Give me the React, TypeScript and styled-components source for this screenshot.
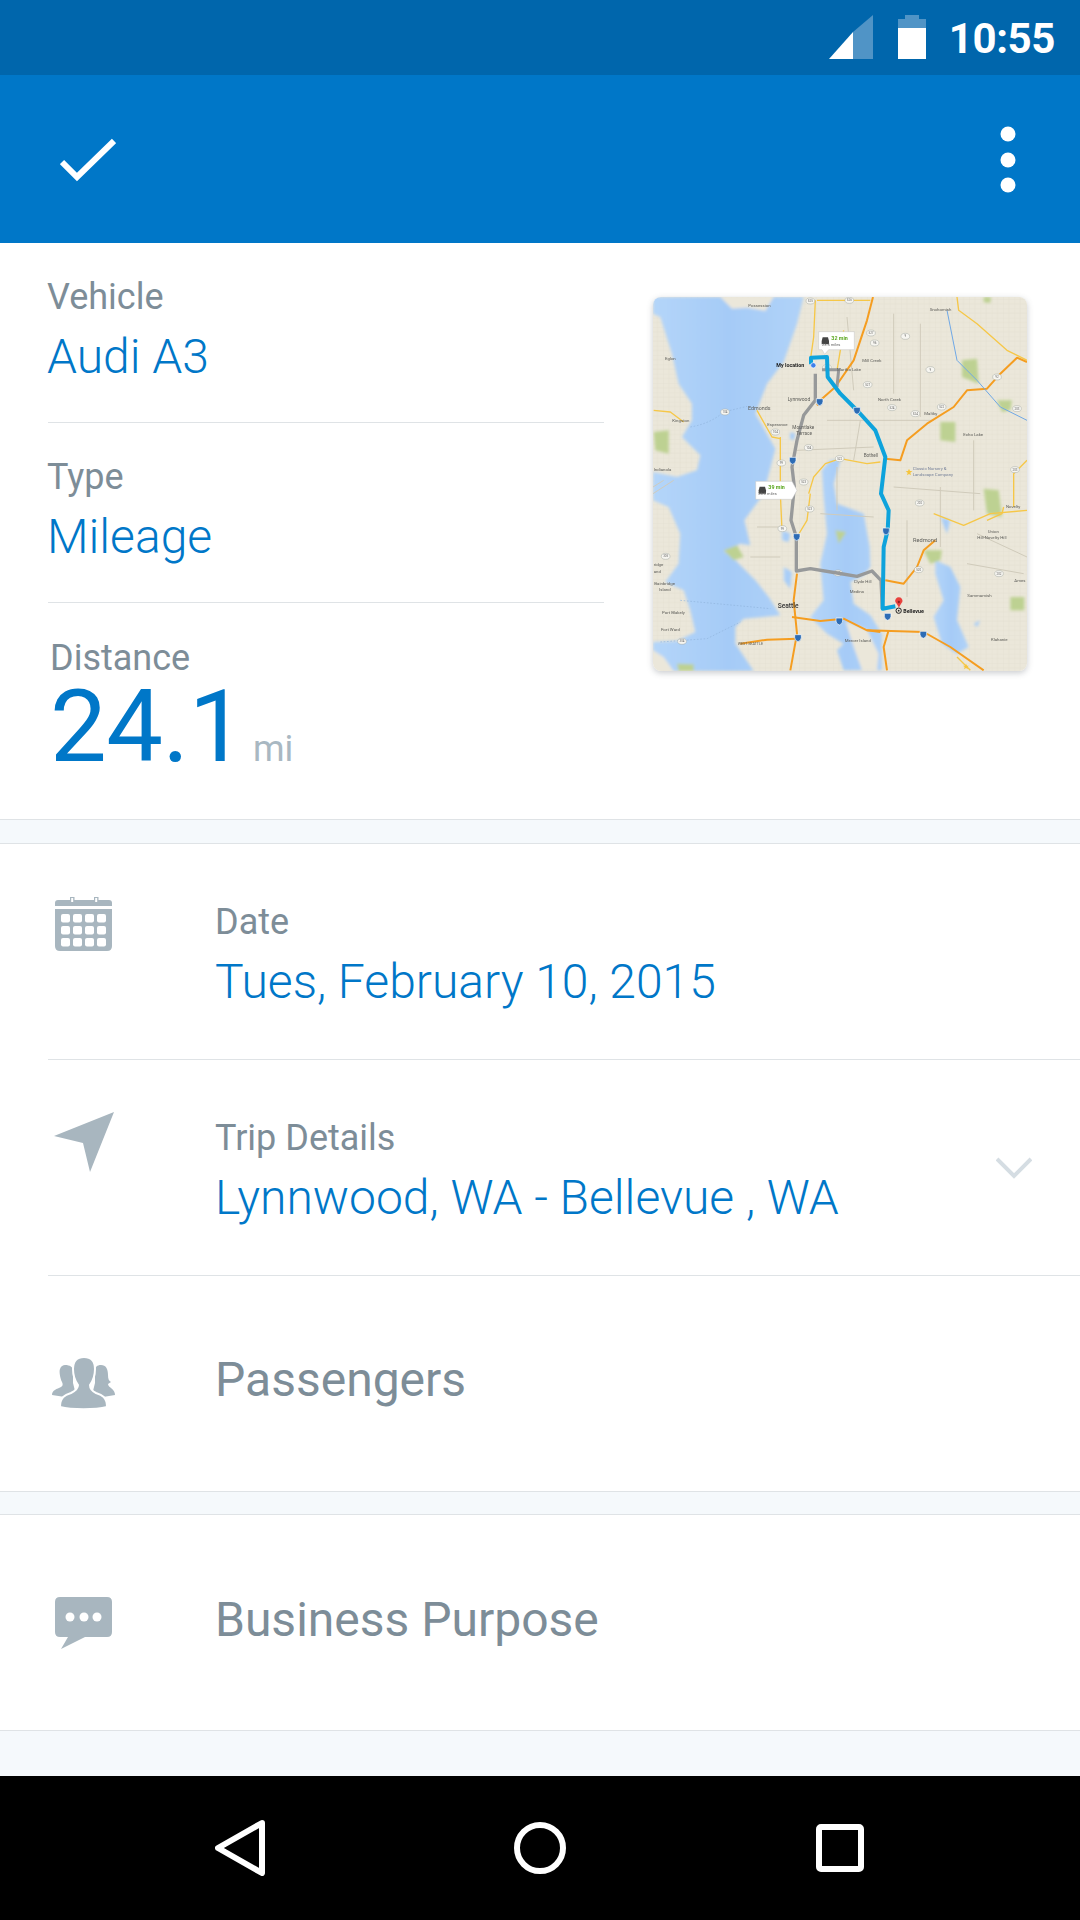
import styled, { createGlobalStyle } from 'styled-components';

const GlobalStyle = createGlobalStyle`
  html, body {
    margin: 0;
    padding: 0;
    background: #fff;
  }
  body {
    font-family: Roboto, "Liberation Sans", sans-serif;
  }
`;

const Screen = styled.div`
  width: 1080px;
  height: 1920px;
  display: flex;
  flex-direction: column;
  overflow: hidden;
  background: #fff;
`;

const StatusBar = styled.div`
  height: 75px;
  background: #0066ac;
  display: flex;
  align-items: flex-start;
  justify-content: flex-end;
  padding: 15px 25px 0 0;
  box-sizing: border-box;
`;

const StatusTime = styled.span`
  margin-left: 23px;
  margin-top: -1px;
  color: #fff;
  font-size: 42px;
  font-weight: 700;
  line-height: 49px;
  letter-spacing: -0.4px;
`;

const StatusIcon = styled.svg`
  display: block;
  & + & {
    margin-left: 25px;
  }
`;

const AppBar = styled.header`
  height: 168px;
  background: #0077c8;
  display: flex;
  align-items: center;
  justify-content: space-between;
  padding: 0 64px 0 60px;
`;

const BarIcon = styled.svg`
  display: block;
  margin-top: 2px;
`;

const Summary = styled.section`
  height: 577px;
  box-sizing: border-box;
  display: flex;
  justify-content: space-between;
  padding: 0 53px 0 48px;
  border-bottom: 1px solid #dfe3e6;
`;

const SummaryFields = styled.div`
  width: 556px;
`;

const SummaryField = styled.div`
  height: 180px;
  box-sizing: border-box;
  padding-top: 35px;
  text-indent: -1px;
  border-bottom: 1px solid #dfe3e6;
`;

const Label = styled.div`
  color: #7d8d98;
  font-size: 36px;
  line-height: 38px;
`;

const Value = styled.div`
  color: #0077c8;
  font-size: 48px;
  font-weight: 300;
  line-height: 54px;
  margin-top: 14px;
`;

const DistanceField = styled.div`
  padding: 36px 0 0 2px;
`;

const DistanceValue = styled.div`
  display: flex;
  align-items: baseline;
  color: #0077c8;
  font-size: 101px;
  line-height: 100px;
  letter-spacing: -0.5px;
`;

const Unit = styled.span`
  margin-left: 8px;
  color: #a9b8c2;
  font-size: 36px;
  line-height: 40px;
  letter-spacing: 0;
`;

const MapCard = styled.div`
  width: 374px;
  height: 374px;
  margin-top: 54px;
  border-radius: 8px;
  overflow: hidden;
  box-shadow: 0 2px 6px rgba(60, 70, 80, 0.28);
`;

const MapDrawing = styled.svg`
  display: block;
  width: 374px;
  height: 374px;
  filter: blur(0.35px);
`;

const Band = styled.div<{ $height: number }>`
  height: ${(p) => p.$height}px;
  box-sizing: border-box;
  background: #f5f9fc;
  border-bottom: 1px solid #dfe3e6;
`;

const ClosedBand = styled(Band)`
  border-top: 1px solid #dfe3e6;
`;

const LastBand = styled.div`
  flex: 1;
  background: #f5f9fc;
  border-top: 1px solid #dfe3e6;
`;

const Row = styled.div<{ $height?: number; $last?: boolean }>`
  height: ${(p) => p.$height ?? 216}px;
  box-sizing: border-box;
  margin-left: 48px;
  padding-left: 7px;
  display: flex;
  align-items: flex-start;
  position: relative;
  border-bottom: ${(p) => (p.$last ? 'none' : '1px solid #dfe3e6')};
`;

const RowIcon = styled.svg<{ $top?: number }>`
  display: block;
  flex: none;
  width: 60px;
  height: 60px;
  overflow: visible;
  margin-top: ${(p) => p.$top ?? 52}px;
  margin-right: 100px;
`;

const RowBody = styled.div`
  padding-top: 59px;
`;

const RowTitle = styled.div<{ $top?: number }>`
  color: #7d8d98;
  font-size: 48px;
  line-height: 54px;
  padding-top: ${(p) => p.$top ?? 77}px;
`;

const Chevron = styled.svg`
  position: absolute;
  right: 48px;
  top: 97px;
`;

const NavBar = styled.nav`
  height: 144px;
  background: #000;
  display: flex;
  align-items: center;
  justify-content: center;
`;

const NavSlot = styled.div`
  width: 300px;
  display: flex;
  justify-content: center;
`;

const rowIconFill = '#a8b6bf';

const water = [
  'M38 100 L60 110 L95 220 L115 310 L155 370 L155 420 L125 470 L180 525 L170 570 L110 590 L38 575 L38 660 L85 680 L120 760 L115 850 L75 905 L130 930 L150 990 L165 1055 L110 1082 L38 1085 L38 1172 L340 1172 L285 1090 L285 1040 L310 1015 L420 1005 L385 950 L345 900 L285 840 L250 812 L300 790 L330 795 L312 720 L370 640 L405 505 L345 400 L380 310 L430 245 L470 130 L490 50 L38 50 Z',
  'M570 540 L600 540 L580 610 L590 670 L670 700 L688 800 L690 860 L670 885 L630 905 L640 970 L690 1005 L725 1060 L725 1170 L610 1170 L590 1110 L610 1090 L560 1060 L510 1010 L550 960 L540 850 L560 760 L550 650 L545 570 Z',
  'M885 840 L930 860 L960 920 L950 1020 L985 1100 L950 1120 L905 1090 L880 1010 L910 960 L885 880 Z',
  'M425 750 L450 760 L445 785 L425 780 Z',
  'M430 860 L455 875 L450 925 L430 900 Z',
  'M450 455 L465 460 L460 480 L448 475 Z',
  'M900 710 L930 720 L920 760 Z',
  'M1000 1030 L1020 1020 L1010 1040 Z'
];

const islands = [
  'M240 50 L400 50 L375 92 L320 82 L275 85 Z',
  'M615 1022 L680 1048 L715 1120 L710 1170 L665 1170 L640 1100 Z',
  'M38 1110 L70 1130 L100 1172 L38 1172 Z'
];

const parks = [
  'M965 240 L1010 235 L1015 310 L965 290 Z',
  'M900 425 L945 425 L945 485 L900 480 Z',
  'M1030 625 L1075 630 L1085 710 L1040 700 Z',
  'M1110 950 L1152 950 L1152 990 L1110 990 Z',
  'M1070 360 L1115 360 L1110 390 L1085 395 Z',
  'M40 455 L85 450 L85 520 L45 510 Z',
  'M250 810 L290 795 L310 830 L280 840 Z',
  'M585 750 L618 755 L595 790 Z',
  'M850 810 L905 810 L900 840 L870 850 Z',
  'M1030 50 L1052 50 L1050 68 L1030 66 Z',
  'M110 1150 L160 1152 L160 1172 L115 1172 Z'
];

const orangeRoads = [
  'M698 50 L680 120 L640 240 L585 320 L540 360',
  'M540 360 L530 375',
  'M735 535 L780 540 L800 480 L860 430 L940 380 L980 330 L1040 325 L1080 280 L1130 232 L1160 245',
  'M455 1010 L540 1022 L610 1015 L680 1050 L850 1055 L930 1100 L1030 1170',
  'M450 1170 L470 1060 L460 960 L470 880',
  'M735 900 L790 910 L830 860 L850 810 L885 780',
  'M740 1170 L730 1100 L745 1050',
  'M300 1090 L380 1078 L470 1075',
  'M680 1050 L720 1055'
];

const yellowRoads = [
  'M950 50 L955 90 L1010 130 L1100 210 L1160 240',
  'M420 470 L420 640 L425 750',
  'M350 390 L395 470 L420 475',
  'M505 640 L520 590 L555 550 L600 535 L680 550 L720 545',
  'M530 60 L600 60 L690 60',
  'M880 700 L970 735 L1050 700 L1160 690',
  'M1160 540 L1120 580 L1120 680',
  'M40 390 L90 395 L130 425',
  'M510 640 L500 720 L470 770',
  'M990 1170 L950 1130',
  'M525 60 L520 170 L510 240',
  'M610 150 L590 270',
  'M1090 680 L1085 700 L1040 720'
];

const thinRoads = [
  'M560 420 L880 420',
  'M470 510 L700 500',
  'M540 700 L700 710',
  'M760 620 L1020 640',
  'M800 720 L800 950',
  'M900 620 L900 800',
  'M590 560 L590 690',
  'M350 740 L430 740',
  'M330 830 L420 830',
  'M620 110 L640 330',
  'M760 100 L760 340',
  'M840 130 L840 410',
  'M660 420 L640 540',
  'M1010 760 L1160 830',
  'M980 850 L1150 880',
  'M1000 480 L1000 690',
  'M38 620 L70 600',
  'M100 600 L38 640'
];

const labels: [number, number, string, number?, string?][] = [
  [324, 79, 'Possession'],
  [868, 92, 'Snohomish'],
  [74, 240, 'Eglon'],
  [666, 245, 'Mill Creek'],
  [590, 273, 'Martha Lake'],
  [442, 361, 'Lynnwood', 15],
  [323, 390, 'Edmonds', 16],
  [713, 363, 'North Creek'],
  [852, 405, 'Maltby'],
  [96, 424, 'Kingston'],
  [381, 437, 'Esperance'],
  [456, 445, 'Mountlake', 14],
  [468, 464, 'Terrace', 14],
  [969, 466, 'Echo Lake'],
  [670, 530, 'Bothell', 14],
  [817, 569, 'Classic Nursery &', 13, '#77829a'],
  [817, 587, 'Landscape Company', 13, '#77829a'],
  [40, 573, 'Indianola'],
  [1097, 684, 'Novelty'],
  [818, 786, 'Redmond', 17],
  [1042, 759, 'Union'],
  [1011, 776, 'Hill-Novelty Hill'],
  [40, 858, 'ridge'],
  [40, 877, 'and'],
  [42, 914, 'Bainbridge'],
  [56, 932, 'Island'],
  [640, 907, 'Clyde Hill'],
  [628, 938, 'Medina'],
  [1122, 904, 'Ames'],
  [981, 951, 'Sammamish'],
  [65, 1001, 'Port Blakely'],
  [62, 1053, 'Fort Ward'],
  [613, 1084, 'Mercer Island'],
  [1052, 1082, 'Klahanie'],
  [292, 1094, 'WEST SEATTLE', 11]
];

const shields: [number, number, string][] = [
  [510, 62, '525'], [627, 60, '526'], [692, 158, '527'], [703, 188, '96'], [795, 168, '9'],
  [870, 268, '9'], [682, 313, '527'], [755, 382, '524'], [825, 400, '524'], [904, 380, '522'],
  [1070, 290, '92'], [1130, 385, '203'], [254, 395, '104'], [405, 455, '104'], [505, 502, '104'],
  [598, 535, '522'], [423, 548, '99'], [490, 605, '523'], [508, 686, '523'], [426, 745, '99'],
  [838, 668, '202'], [1124, 568, '203'], [835, 868, '520'], [1076, 880, '202'], [76, 828, '305'],
  [125, 1083, '304'], [593, 878, '520'], [560, 262, '525']
];

const interstates: [number, number][] = [
  [538, 364], [650, 390], [457, 540], [737, 752], [469, 769], [742, 1008], [597, 1022], [849, 1062], [473, 1072]
];

function MapImage() {
  return (
    <MapDrawing viewBox="38 50 1122 1122">
      <defs>
        <filter id="coast" x="-5%" y="-5%" width="110%" height="110%">
          <feGaussianBlur stdDeviation="5" />
        </filter>
        <pattern id="streets" width="34" height="28" patternUnits="userSpaceOnUse">
          <path d="M0 0 H34 M0 14 H34 M0 0 V28 M17 0 V28" fill="none" stroke="#e1ddce" strokeWidth="1.5" />
        </pattern>
        <linearGradient id="sound" x1="0" y1="0" x2="1" y2="0">
          <stop offset="0" stopColor="#b4d5f9" />
          <stop offset="0.5" stopColor="#a5cbf7" />
          <stop offset="1" stopColor="#b0d2f8" />
        </linearGradient>
      </defs>
      <rect x="38" y="50" width="1122" height="1122" fill="#ebe7da" />
      <rect x="38" y="50" width="1122" height="1122" fill="url(#streets)" />
      <g filter="url(#coast)">
        {water.map((d) => (
          <path key={d} d={d} fill="url(#sound)" />
        ))}
        {islands.map((d) => (
          <path key={d} d={d} fill="#ebe7da" />
        ))}
        {parks.map((d) => (
          <path key={d} d={d} fill="#bdd192" />
        ))}
      </g>
      {thinRoads.map((d) => (
        <path key={d} d={d} fill="none" stroke="#d0cbbb" strokeWidth="3" />
      ))}
      {yellowRoads.map((d) => (
        <path key={d} d={d} fill="none" stroke="#f6c747" strokeWidth="4" strokeLinejoin="round" />
      ))}
      {orangeRoads.map((d) => (
        <path key={d} d={d} fill="none" stroke="#f59d20" strokeWidth="6" strokeLinejoin="round" />
      ))}
      <path d="M150 440 Q210 430 250 395 L320 378" fill="none" stroke="#8fb4dd" strokeWidth="2" strokeDasharray="5 5" />
      <path d="M120 960 L390 985 M60 1085 L200 1075 L300 1025" fill="none" stroke="#8fb4dd" strokeWidth="2" strokeDasharray="5 5" />
      <path d="M920 90 L950 240 L1010 300 L1080 380 L1160 420" fill="none" stroke="#6fa8e6" strokeWidth="3" />
      {shields.map(([x, y, n]) => (
        <g key={`${x}-${y}`}>
          <ellipse cx={x} cy={y} rx="13" ry="9" fill="#f7f6f1" stroke="#a5aaa5" strokeWidth="1.5" />
          <text x={x} y={y + 3} textAnchor="middle" fontFamily="Roboto" fontSize="9" fill="#666">
            {n}
          </text>
        </g>
      ))}
      <path
        d="M525 280 L525 360 L490 405 L470 480 L455 560 L462 620 L452 720 L468 770 L468 872 L510 865 L590 878 L650 888 L695 872 L722 900 L726 985"
        fill="none"
        stroke="#97999a"
        strokeWidth="10"
        strokeLinejoin="round"
      />
      <path d="M545 268 L595 268 L590 320" fill="none" stroke="#97999a" strokeWidth="9" />
      <path
        d="M512 252 L512 232 L560 230 L562 290 L600 340 L655 395 L705 450 L735 530 L722 640 L745 690 L742 750 L730 800 L727 985 L765 978"
        fill="none"
        stroke="#0ea3dc"
        strokeWidth="12"
        strokeLinejoin="round"
      />
      {interstates.map(([x, y]) => (
        <path
          key={`${x}-${y}`}
          d={`M${x - 10} ${y - 9} h20 v9 q0 9 -10 12 q-10 -3 -10 -12 Z`}
          fill="#2d6cb5"
          stroke="#fff"
          strokeWidth="2"
        />
      ))}
      {labels.map(([x, y, text, size, color]) => (
        <text key={text} x={x} y={y} fontFamily="Roboto" fontSize={size ?? 13} fill={color ?? '#5c5c58'}>
          {text}
        </text>
      ))}
      <text x="412" y="983" fontFamily="Roboto" fontSize="20" fontWeight="500" fill="#333">Seattle</text>
      <text x="408" y="261" fontFamily="Roboto" fontSize="16" fontWeight="700" fill="#222">My location</text>
      <circle cx="519" cy="255" r="8" fill="#3f80ea" stroke="#fff" strokeWidth="2" />
      <text x="789" y="997" fontFamily="Roboto" fontSize="16" fontWeight="700" fill="#222">Bellevue</text>
      <circle cx="775" cy="991" r="8" fill="none" stroke="#222" strokeWidth="3" />
      <circle cx="775" cy="991" r="2.5" fill="#222" />
      <path d="M776 982 C768 968 765 965 765 965 A11 11 0 1 1 786 965 C786 965 783 968 776 982 Z" fill="#e8413d" />
      <circle cx="775.5" cy="965" r="3.5" fill="#8e1e1c" />
      <path d="M806 565 l3 7 h7 l-6 5 l2 8 l-6 -4 l-6 4 l2 -8 l-6 -5 h7 Z" fill="#f6c53c" />
      <path d="M977 1150 l3 6 h6 l-5 4 l2 7 l-6 -4 l-6 4 l2 -7 l-5 -4 h6 Z" fill="#f6c53c" />
      <path d="M535 154 H642 V208 H565 L553 222 L545 208 H535 Z" fill="#fff" stroke="#c4c4c4" strokeWidth="1.5" />
      <path d="M544 182 l3 -11 h16 l3 11 v10 h-22 Z" fill="#444" />
      <text x="573" y="178" fontFamily="Roboto" fontSize="16" fontWeight="700" fill="#5aa61e">32 min</text>
      <text x="545" y="197" fontFamily="Roboto" fontSize="12" fill="#666">23.5 miles</text>
      <path d="M346 603 H455 L470 630 L455 657 H346 Z" fill="#fff" stroke="#c4c4c4" strokeWidth="1.5" />
      <path d="M355 630 l3 -11 h16 l3 11 v10 h-22 Z" fill="#444" />
      <text x="384" y="627" fontFamily="Roboto" fontSize="16" fontWeight="700" fill="#5aa61e">39 min</text>
      <text x="354" y="645" fontFamily="Roboto" fontSize="12" fill="#666">26.2 miles</text>
    </MapDrawing>
  );
}

function CalendarIcon() {
  const cells = [];
  for (let r = 0; r < 3; r++) {
    for (let c = 0; c < 4; c++) {
      cells.push(<rect key={`${r}${c}`} x={6 + c * 12} y={18 + r * 12} width="9" height="8.5" rx="2" fill="#fff" />);
    }
  }
  return (
    <RowIcon $top={52} viewBox="0 0 60 60">
      <path d="M3 4 H54 Q57 4 57 7 V10 H0 V7 Q0 4 3 4 Z" fill={rowIconFill} />
      <path d="M15 1 h4.5 v6 h-4.5 Z M39 1 h4.5 v6 h-4.5 Z" fill={rowIconFill} />
      <path d="M16.2 2 h2 v4 h-2 Z M40.2 2 h2 v4 h-2 Z" fill="#fff" />
      <path d="M0 13 H57 V50 Q57 55 52 55 H5 Q0 55 0 50 Z" fill={rowIconFill} />
      {cells}
    </RowIcon>
  );
}

function ArrowIcon() {
  return (
    <RowIcon viewBox="0 0 60 60">
      <path d="M-1 24 L59 0 L35 60 L28 31 Z" fill={rowIconFill} />
    </RowIcon>
  );
}

function PeopleIcon() {
  return (
    <RowIcon $top={81} viewBox="0 0 60 60">
      <path
        d="M10 8 C15 8 18 10 18 14 L18 26 L20 34 L10 40 L-3 38 C-3 33 2 32 6 30 C8 29 8 27 7 25 C5 21 4 14 5 12 C6 9 8 8 10 8 Z"
        fill={rowIconFill}
      />
      <path
        d="M46 8 C51 8 53 12 53 18 C53 22 54 24 56 25 L53 27 C53 29 55 30 56 31 C59 33 60 36 60 38 L48 40 L38 34 L40 26 L40 14 C40 10 42 8 46 8 Z"
        fill={rowIconFill}
      />
      <path
        d="M29 0 C36 0 40 3 40 12 C40 19 38 24 35 28 C35 32 37 34 41 36 C47 38 52 40 52 50 C40 53 17 53 5 50 C5 40 10 38 16 36 C20 34 23 32 23 28 C20 24 18 19 18 12 C18 3 22 0 29 0 Z"
        fill={rowIconFill}
        stroke="#fff"
        strokeWidth="2"
      />
    </RowIcon>
  );
}

function ChatIcon() {
  return (
    <RowIcon $top={82} viewBox="0 0 60 60">
      <path
        d="M5 0 H52 Q57 0 57 5 V35 Q57 40 52 40 H30 L6 52 L13 40 H5 Q0 40 0 35 V5 Q0 0 5 0 Z"
        fill={rowIconFill}
      />
      <circle cx="15" cy="20" r="4.5" fill="#fff" />
      <circle cx="29" cy="20" r="4.5" fill="#fff" />
      <circle cx="42" cy="20" r="4.5" fill="#fff" />
    </RowIcon>
  );
}

export default function App() {
  return (
    <Screen>
      <GlobalStyle />
      <StatusBar>
        <StatusIcon width="44" height="44" viewBox="0 0 44 44">
          <path d="M44 0 V44 H24 V17 Z" fill="#5094c6" />
          <path d="M24 17 V44 H0 Z" fill="#fff" />
        </StatusIcon>
        <StatusIcon width="28" height="44" viewBox="0 0 28 44">
          <path d="M7 0 H21 V4 H28 V13 H0 V4 H7 Z" fill="#5094c6" />
          <rect y="13" width="28" height="31" fill="#fff" />
        </StatusIcon>
        <StatusTime>10:55</StatusTime>
      </StatusBar>
      <AppBar>
        <BarIcon width="56" height="44" viewBox="0 0 56 44">
          <path d="M2 24 L17 39 L54 3" fill="none" stroke="#fff" strokeWidth="6" />
        </BarIcon>
        <BarIcon width="16" height="68" viewBox="0 0 16 68">
          <circle cx="8" cy="8" r="7.5" fill="#fff" />
          <circle cx="8" cy="34" r="7.5" fill="#fff" />
          <circle cx="8" cy="59" r="7.5" fill="#fff" />
        </BarIcon>
      </AppBar>
      <Summary>
        <SummaryFields>
          <SummaryField>
            <Label>Vehicle</Label>
            <Value>Audi A3</Value>
          </SummaryField>
          <SummaryField>
            <Label>Type</Label>
            <Value>Mileage</Value>
          </SummaryField>
          <DistanceField>
            <Label>Distance</Label>
            <DistanceValue>
              24.1<Unit>mi</Unit>
            </DistanceValue>
          </DistanceField>
        </SummaryFields>
        <MapCard>
          <MapImage />
        </MapCard>
      </Summary>
      <Band $height={24} />
      <Row>
        <CalendarIcon />
        <RowBody>
          <Label>Date</Label>
          <Value>Tues, February 10, 2015</Value>
        </RowBody>
      </Row>
      <Row>
        <ArrowIcon />
        <RowBody>
          <Label>Trip Details</Label>
          <Value>Lynnwood, WA - Bellevue , WA</Value>
        </RowBody>
        <Chevron width="36" height="22" viewBox="0 0 36 22">
          <path d="M1 2 L18 19 L35 2" fill="none" stroke="#d5dde3" strokeWidth="4" />
        </Chevron>
      </Row>
      <Row $height={215} $last>
        <PeopleIcon />
        <RowTitle>Passengers</RowTitle>
      </Row>
      <ClosedBand $height={24} />
      <Row $height={215} $last>
        <ChatIcon />
        <RowTitle $top={78}>Business Purpose</RowTitle>
      </Row>
      <LastBand />
      <NavBar>
        <NavSlot>
          <svg width="50" height="56" viewBox="0 0 50 56">
            <path d="M47 3 L3 28 L47 53 Z" fill="none" stroke="#fff" strokeWidth="6" strokeLinejoin="round" />
          </svg>
        </NavSlot>
        <NavSlot>
          <svg width="52" height="52" viewBox="0 0 52 52">
            <circle cx="26" cy="26" r="23" fill="none" stroke="#fff" strokeWidth="6" />
          </svg>
        </NavSlot>
        <NavSlot>
          <svg width="48" height="48" viewBox="0 0 48 48">
            <rect x="3" y="3" width="42" height="42" rx="2" fill="none" stroke="#fff" strokeWidth="6" />
          </svg>
        </NavSlot>
      </NavBar>
    </Screen>
  );
}
